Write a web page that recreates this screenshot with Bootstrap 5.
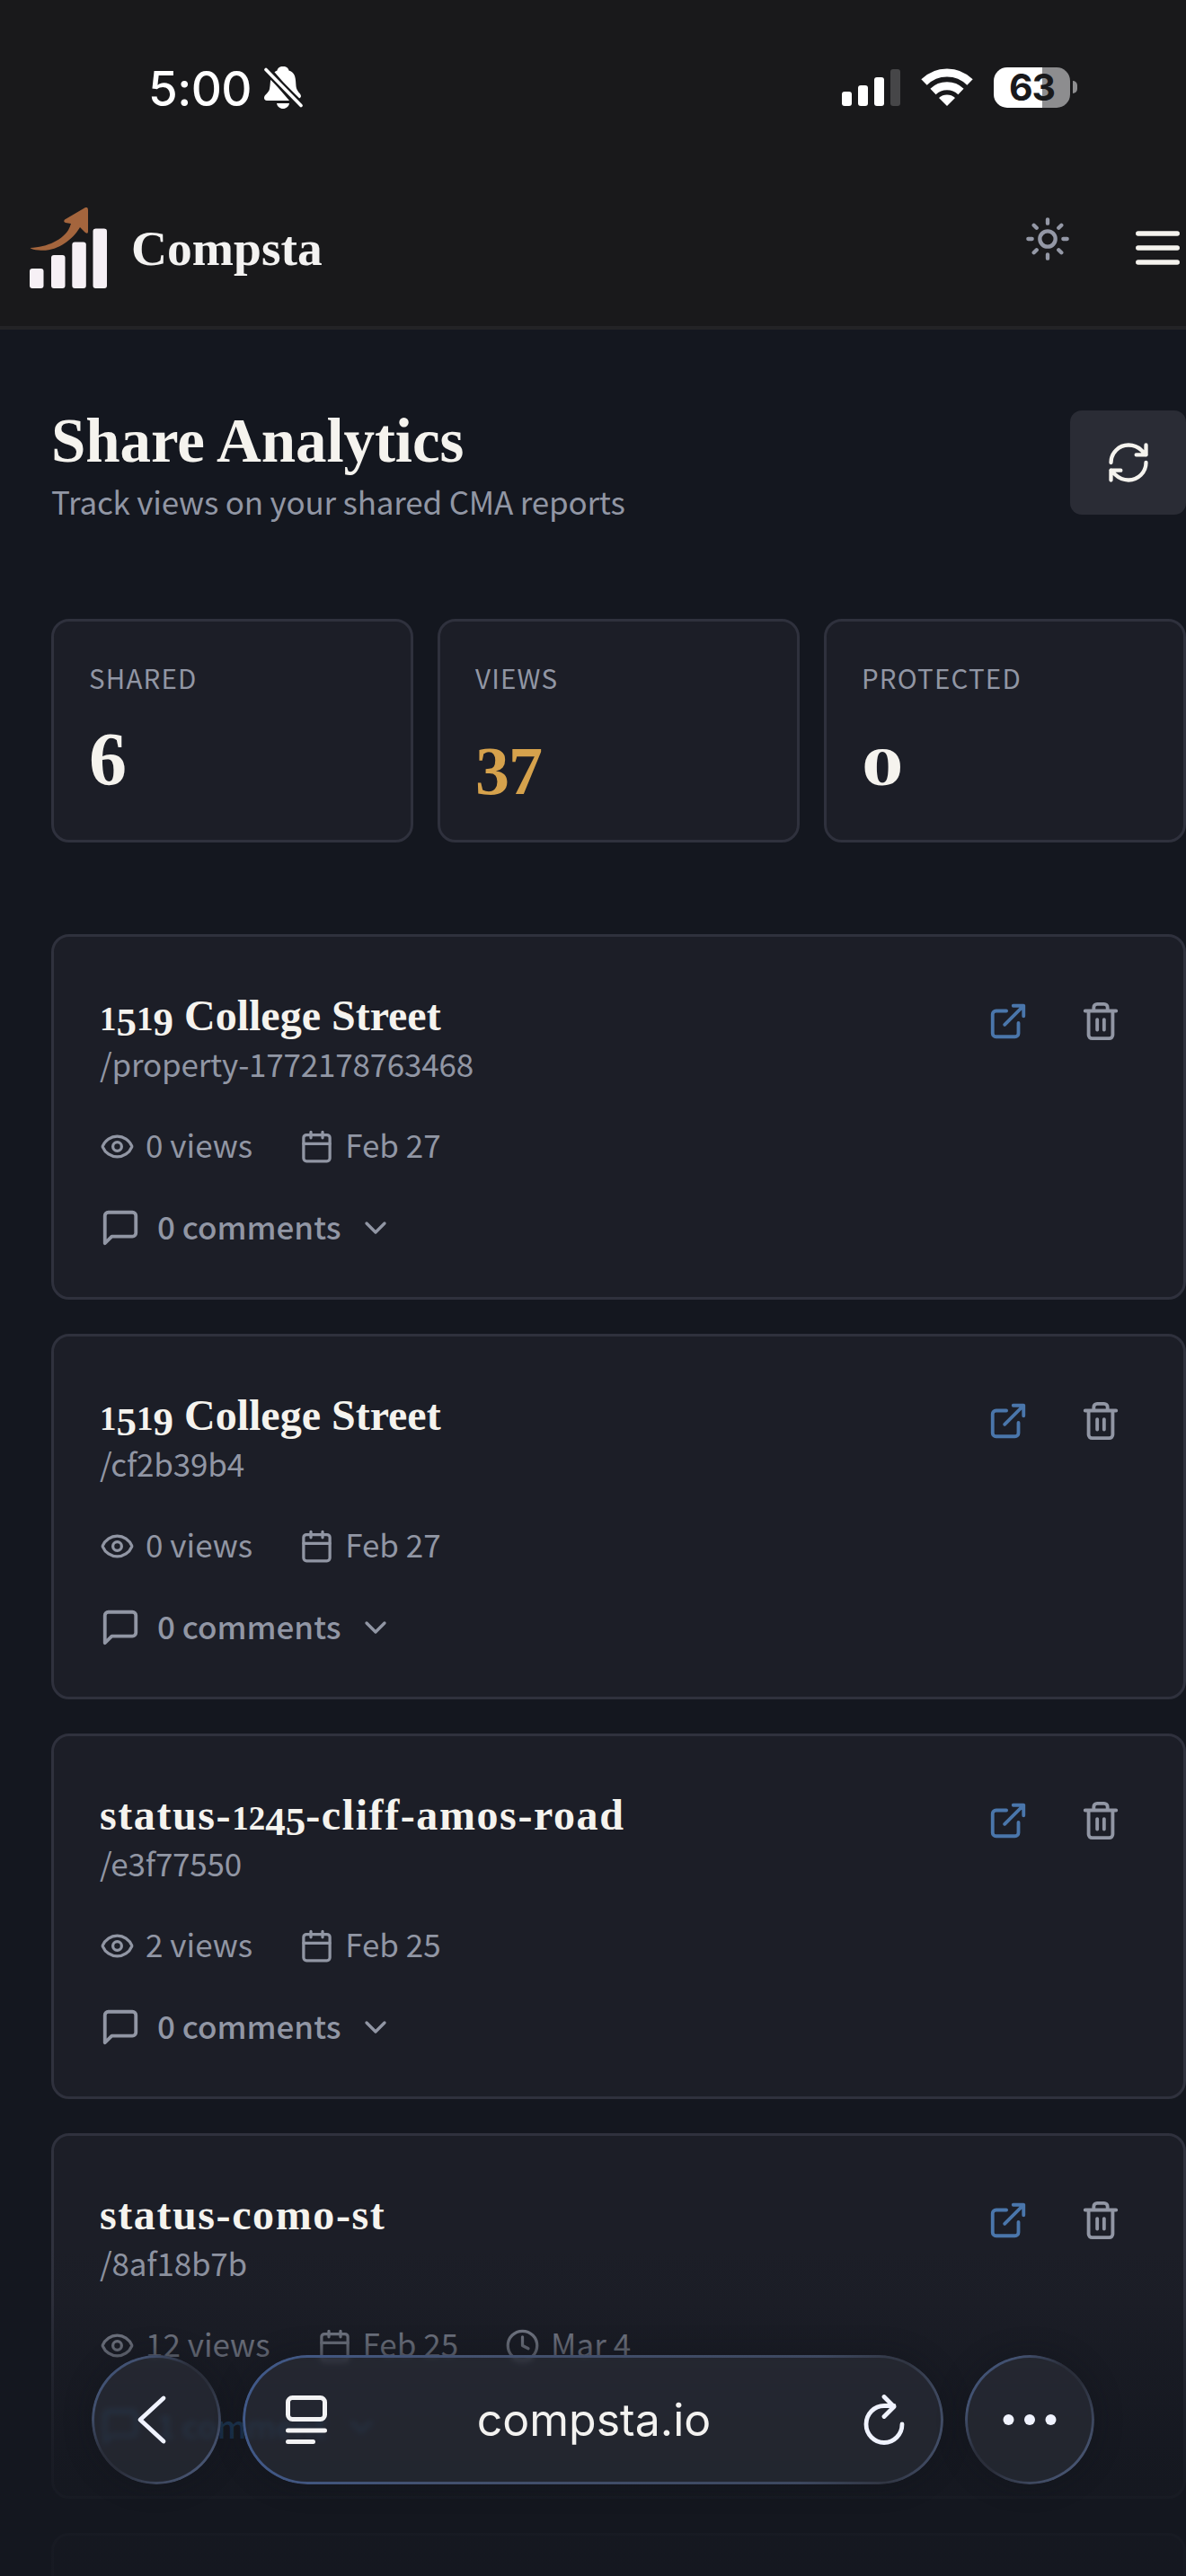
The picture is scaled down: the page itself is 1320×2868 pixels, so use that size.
<!DOCTYPE html>
<html lang="en" data-bs-theme="dark">
<head>
<meta charset="utf-8">
<title>Compsta - Share Analytics</title>
<link href="https://cdn.jsdelivr.net/npm/bootstrap@5.3.0/dist/css/bootstrap.min.css" rel="stylesheet">
<style>
  body { background: #14171f; color: #9196a4; font-family: "Noto Sans CJK SC", "Open Sans", sans-serif; }
  .phone { width: 1320px; height: 2868px; }
  svg { display: block; flex: none; }
  .ico { fill: none; stroke: currentColor; stroke-width: 2; stroke-linecap: round; stroke-linejoin: round; }
  .display-face { font-family: "Liberation Serif", serif; font-weight: 700; color: #f5f3ee; margin: 0; }
  .ui-face { font-family: Inter, "Liberation Sans", sans-serif; }

  .app-top { height: 367px; background: #19191b; border-bottom: 4px solid #232326; }
  .status-bar { height: 194px; padding: 0 121px 0 165px; color: #fff; }
  .clock-text { font-size: 53px; line-height: 60px; font-weight: 500; letter-spacing: -.6px; margin: 3px 13px 0 0; }
  .battery { width: 85px; height: 45px; border-radius: 15px; background: linear-gradient(90deg, #fff 63.5%, #8d8d8f 63.5%);
             color: #19191b; font-size: 41px; line-height: 45px; font-weight: 700; letter-spacing: -1px; }
  .battery-cap { width: 5px; height: 14px; border-radius: 0 5px 5px 0; background: #8d8d8f; margin-left: 3px; }
  .wifi { margin: 0 23px; }
  .top-nav { height: 162px; padding: 2px 7px 0 33px; }
  .brand-text { font-size: 55.5px; line-height: 60px; margin: 2px 0 0 27px; color: #f3f2f1; }
  .theme-btn { color: #9498a6; margin: 0 72px 20px 0; }

  .page-main { padding: 84px 0 0 57px; }
  .page-title { font-size: 69px; line-height: 80px; letter-spacing: -.1px; }
  .page-sub { font-size: 35px; line-height: 50px; letter-spacing: -.2px; margin-top: 2px; }
  .refresh-btn { width: 129px; height: 116px; margin-top: 6px; border-radius: 13px; background: #2a2c35; color: #f5f3ee; }

  .panel { background: #1c1e27; border: 3px solid #2f313d; border-radius: 20px; }
  .stats { gap: 27px; margin-top: 106px; }
  .stat { height: 249px; padding: 40px 39px 0; }
  .stat-label { font-size: 29.5px; line-height: 44px; letter-spacing: 1.2px; }
  .stat-num { font-size: 84px; line-height: 84px; margin-top: 28px; }
  .stat-num span { display: inline-block; line-height: 0; }
  .gold { color: #d6a24c; }
  .n-low { font-size: 76px; vertical-align: -10px; letter-spacing: -1px; }
  .n-round { font-size: 62px; transform: scaleX(1.5); transform-origin: 0 50%; }

  .shares { margin-top: 102px; gap: 38px; }
  .share { height: 407px; flex: none; padding: 58px 69px 0 51px; }
  .share-title { font-size: 48px; line-height: 60px; }
  .share-title.slugged { letter-spacing: 1.6px; }
  .share-title i { font-style: normal; line-height: 0; letter-spacing: 0; }
  .dx { font-size: 37px; }
  .dd { font-size: 45px; vertical-align: -6px; }
  .share-path { font-size: 35px; line-height: 46px; letter-spacing: -.2px; }
  .meta { margin-top: 42px; font-size: 35px; line-height: 50px; gap: 52px; }
  .meta > span { gap: 12px; }
  .meta svg { margin-top: 5px; }
  .comments { margin-top: 41px; font-size: 35px; line-height: 50px; font-weight: 500; }
  .comments svg { margin-top: 3px; }
  .comments .lbl { margin: 0 19px 0 18px; }
  .comments.linked { color: #3079c0; }
  .actions { gap: 57px; margin-top: 13px; height: 46px; }
  .blue { color: #4a76ab; }

  .fade-layer { position: absolute; left: 0; right: 0; top: 2500px; height: 368px;
    background: linear-gradient(180deg, rgba(20,23,31,0) 0, rgba(20,23,31,.1) 60px, rgba(20,23,31,.42) 120px, rgba(20,23,31,.7) 200px, rgba(20,23,31,.85) 265px, rgba(20,23,31,.88) 100%); }
  .browser-bar { position: absolute; left: 102px; top: 2622px; width: 1116px; height: 144px; gap: 24px; color: #f0f3ff; }
  .glass { position: relative; height: 144px; border-radius: 72px; background: rgba(45,48,58,.58);
    backdrop-filter: blur(3px); box-shadow: 0 0 30px rgba(15,18,24,.35); }
  .glass::before { content: ""; position: absolute; inset: 0; padding: 3px; border-radius: inherit;
    background: linear-gradient(135deg, #405680 0, #42506e 22%, #2a2e3a 42%, #2a2e3a 55%, #46536f 85%, #3e4a64 100%);
    -webkit-mask: linear-gradient(#000 0 0) content-box, linear-gradient(#000 0 0); -webkit-mask-composite: xor; mask-composite: exclude; }
  .glass.rnd { width: 144px; }
  .glass.addr { padding: 0 42px 0 47px; }
  .glass.addr::before { background: linear-gradient(100deg, #40598a 0, #43516f 30%, #3d4860 80%, #303542 92%, #46536f 100%); }
  .back-ico { stroke-width: 4.8; }
  .addr-text { font-size: 50px; line-height: 60px; color: #f3f2f0; margin-left: -3px; }
</style>
<script src="https://cdn.jsdelivr.net/npm/bootstrap@5.3.0/dist/js/bootstrap.bundle.min.js"></script>
</head>
<body>
<div class="phone position-relative overflow-hidden">
<svg width="0" height="0" class="position-absolute">
  <symbol id="i-open" viewBox="0 0 24 24"><path d="M15 3h6v6M10 14 21 3M18 13v6a2 2 0 0 1-2 2H5a2 2 0 0 1-2-2V8a2 2 0 0 1 2-2h6"/></symbol>
  <symbol id="i-trash" viewBox="0 0 24 24"><path d="M3 6h18M19 6v14a2 2 0 0 1-2 2H7a2 2 0 0 1-2-2V6M8 6V4a2 2 0 0 1 2-2h4a2 2 0 0 1 2 2v2M10 11v6M14 11v6"/></symbol>
  <symbol id="i-eye" viewBox="0 0 24 24"><path d="M2.062 12.348a1 1 0 0 1 0-.696 10.75 10.75 0 0 1 19.876 0 1 1 0 0 1 0 .696 10.75 10.75 0 0 1-19.876 0"/><circle cx="12" cy="12" r="3"/></symbol>
  <symbol id="i-cal" viewBox="0 0 24 24"><path d="M8 2v4M16 2v4M3 10h18"/><rect x="3" y="4" width="18" height="18" rx="2"/></symbol>
  <symbol id="i-clock" viewBox="0 0 24 24"><circle cx="12" cy="12" r="10"/><path d="M12 6v6l4 2"/></symbol>
  <symbol id="i-msg" viewBox="0 0 24 24"><path d="M21 15a2 2 0 0 1-2 2H7l-4 4V5a2 2 0 0 1 2-2h14a2 2 0 0 1 2 2z"/></symbol>
  <symbol id="i-down" viewBox="0 0 24 24"><path d="m6 9 6 6 6-6"/></symbol>
</svg>

<header class="app-top">
  <div class="status-bar ui-face d-flex align-items-center justify-content-between">
    <div class="d-flex align-items-center">
      <span class="clock-text">5:00</span>
      <svg width="44" height="48" viewBox="0 0 44 48">
        <path fill="#fff" d="M22 1c-4 0-6 2-6.500 4.500-1 .3-2 1-3 1.800L38 37c2.500 0 4-1.500 4-3 0-3-5-5-5.500-11C36 14 36 8 28.500 5.500 28 3 26 1 22 1zM8.500 15C7.500 18 8 21 7 26c-1 5-6 6-6 10 0 1.600 1 3 3 3h25zM15 42h14c-.5 3.500-3.500 6-7 6s-6.500-2.500-7-6z"/>
        <path stroke="#19191b" stroke-width="8" d="M2 4 43 45"/>
        <path stroke="#fff" stroke-width="3.600" stroke-linecap="round" d="M3 4.500 42 44.500"/>
      </svg>
    </div>
    <div class="d-flex align-items-center">
      <svg width="65" height="41" viewBox="0 0 65 41" fill="#fff"><rect y="25" width="11" height="16" rx="3"/><rect x="18" y="18" width="11" height="23" rx="3"/><rect x="36" y="9" width="11" height="32" rx="3"/><rect x="54" width="11" height="41" rx="3" fill="#464648"/></svg>
      <svg class="wifi" width="58" height="42" viewBox="0 0 58 42" fill="none" stroke="#fff" stroke-width="9"><path d="M3.500 15.500a36 36 0 0 1 51 0"/><path d="M13.500 26a22.500 22.500 0 0 1 31 0"/><path d="M29 42 20 33a13.500 13.500 0 0 1 18 0z" fill="#fff" stroke="none"/></svg>
      <div class="battery text-center">63</div><div class="battery-cap"></div>
    </div>
  </div>
  <nav class="top-nav d-flex align-items-center">
    <svg width="86" height="90" viewBox="0 0 86 90">
      <g fill="#f6f0f5"><rect y="68" width="15.500" height="22" rx="3"/><rect x="24" y="53" width="15.500" height="37" rx="3"/><rect x="47.300" y="38.500" width="15.500" height="51.500" rx="3"/><rect x="70.500" y="23.500" width="15.500" height="66.500" rx="3"/></g>
      <path fill="#a4653d" d="M62 0q3-1 3 3v24q0 3-3 1l-6-6C48 36 30 50 10 47.500Q3 47 .5 45C22 44 42 34 46 18l-6-1q-3-1-1-3.500z"/>
    </svg>
    <span class="display-face brand-text">Compsta</span>
    <a class="theme-btn ms-auto"><svg class="ico" width="52" height="52" viewBox="0 0 24 24"><circle cx="12" cy="12" r="4"/><path d="M12 2v2M12 20v2M4.930 4.930l1.410 1.410M17.660 17.660l1.410 1.410M2 12h2M20 12h2M6.340 17.660l-1.410 1.410M19.070 4.930l-1.410 1.410"/></svg></a>
    <svg width="49" height="38" viewBox="0 0 49 38" stroke="#f5f3ee" stroke-width="5.500" stroke-linecap="round"><path d="M2.800 3h43.400M2.800 19h43.400M2.800 35h43.400"/></svg>
  </nav>
</header>

<main class="page-main">
  <div class="d-flex justify-content-between align-items-start">
    <div>
      <h1 class="display-face page-title">Share Analytics</h1>
      <div class="page-sub">Track views on your shared CMA reports</div>
    </div>
    <a class="refresh-btn d-flex align-items-center justify-content-center"><svg class="ico" width="52" height="52" viewBox="0 0 24 24"><path d="M3 12a9 9 0 0 1 9-9 9.750 9.750 0 0 1 6.740 2.740L21 8M21 3v5h-5M21 12a9 9 0 0 1-9 9 9.750 9.750 0 0 1-6.740-2.740L3 16M8 16H3v5"/></svg></a>
  </div>

  <section class="stats d-flex">
    <div class="panel stat flex-fill w-100"><div class="stat-label">SHARED</div><div class="display-face stat-num">6</div></div>
    <div class="panel stat flex-fill w-100"><div class="stat-label">VIEWS</div><div class="display-face stat-num gold"><span class="n-low">37</span></div></div>
    <div class="panel stat flex-fill w-100"><div class="stat-label">PROTECTED</div><div class="display-face stat-num"><span class="n-round">0</span></div></div>
  </section>

  <section class="shares d-flex flex-column">
    <article class="panel share d-flex justify-content-between">
      <div>
        <h2 class="display-face share-title"><i class="dx">1</i><i class="dd">5</i><i class="dx">1</i><i class="dd">9</i> College Street</h2>
        <div class="share-path">/property-1772178763468</div>
        <div class="meta d-flex">
          <span class="d-flex align-items-center"><svg class="ico" width="39" height="39"><use href="#i-eye"/></svg>0 views</span>
          <span class="d-flex align-items-center"><svg class="ico" width="39" height="39"><use href="#i-cal"/></svg>Feb 27</span>
        </div>
        <div class="comments d-flex align-items-center"><svg class="ico" width="46" height="46"><use href="#i-msg"/></svg><span class="lbl">0 comments</span><svg class="ico" width="40" height="40"><use href="#i-down"/></svg></div>
      </div>
      <div class="actions d-flex"><svg class="ico blue" width="46" height="46"><use href="#i-open"/></svg><svg class="ico" width="46" height="46"><use href="#i-trash"/></svg></div>
    </article>

    <article class="panel share d-flex justify-content-between">
      <div>
        <h2 class="display-face share-title"><i class="dx">1</i><i class="dd">5</i><i class="dx">1</i><i class="dd">9</i> College Street</h2>
        <div class="share-path">/cf2b39b4</div>
        <div class="meta d-flex">
          <span class="d-flex align-items-center"><svg class="ico" width="39" height="39"><use href="#i-eye"/></svg>0 views</span>
          <span class="d-flex align-items-center"><svg class="ico" width="39" height="39"><use href="#i-cal"/></svg>Feb 27</span>
        </div>
        <div class="comments d-flex align-items-center"><svg class="ico" width="46" height="46"><use href="#i-msg"/></svg><span class="lbl">0 comments</span><svg class="ico" width="40" height="40"><use href="#i-down"/></svg></div>
      </div>
      <div class="actions d-flex"><svg class="ico blue" width="46" height="46"><use href="#i-open"/></svg><svg class="ico" width="46" height="46"><use href="#i-trash"/></svg></div>
    </article>

    <article class="panel share d-flex justify-content-between">
      <div>
        <h2 class="display-face share-title slugged">status-<i class="dx">12</i><i class="dd">45</i>-cliff-amos-road</h2>
        <div class="share-path">/e3f77550</div>
        <div class="meta d-flex">
          <span class="d-flex align-items-center"><svg class="ico" width="39" height="39"><use href="#i-eye"/></svg>2 views</span>
          <span class="d-flex align-items-center"><svg class="ico" width="39" height="39"><use href="#i-cal"/></svg>Feb 25</span>
        </div>
        <div class="comments d-flex align-items-center"><svg class="ico" width="46" height="46"><use href="#i-msg"/></svg><span class="lbl">0 comments</span><svg class="ico" width="40" height="40"><use href="#i-down"/></svg></div>
      </div>
      <div class="actions d-flex"><svg class="ico blue" width="46" height="46"><use href="#i-open"/></svg><svg class="ico" width="46" height="46"><use href="#i-trash"/></svg></div>
    </article>

    <article class="panel share d-flex justify-content-between">
      <div>
        <h2 class="display-face share-title slugged">status-como-st</h2>
        <div class="share-path">/8af18b7b</div>
        <div class="meta d-flex">
          <span class="d-flex align-items-center"><svg class="ico" width="39" height="39"><use href="#i-eye"/></svg>12 views</span>
          <span class="d-flex align-items-center"><svg class="ico" width="39" height="39"><use href="#i-cal"/></svg>Feb 25</span>
          <span class="d-flex align-items-center"><svg class="ico" width="39" height="39"><use href="#i-clock"/></svg>Mar 4</span>
        </div>
        <div class="comments linked d-flex align-items-center"><svg class="ico" width="46" height="46"><use href="#i-msg"/></svg><span class="lbl">1 comment</span><svg class="ico" width="40" height="40"><use href="#i-down"/></svg></div>
      </div>
      <div class="actions d-flex"><svg class="ico blue" width="46" height="46"><use href="#i-open"/></svg><svg class="ico" width="46" height="46"><use href="#i-trash"/></svg></div>
    </article>

    <article class="panel share"></article>
  </section>
</main>

<div class="fade-layer"></div>
<div class="browser-bar d-flex">
  <div class="glass rnd d-flex align-items-center justify-content-center"><svg class="ico back-ico" width="144" height="138" viewBox="0 0 144 138"><path d="M80 45 54 69l26 24"/></svg></div>
  <div class="glass addr flex-fill d-flex align-items-center justify-content-between">
    <svg width="48" height="56" viewBox="0 0 48 56" fill="none" stroke="#f3f3f4" stroke-width="5" stroke-linecap="round"><rect x="3.500" y="3.500" width="41" height="24" rx="5"/><path d="M3.500 40h41M3.500 52.500h28"/></svg>
    <span class="ui-face addr-text">compsta.io</span>
    <svg width="48" height="56" viewBox="0 0 48 56" fill="none" stroke="#f0f3ff" stroke-width="4.800" stroke-linecap="round" stroke-linejoin="round"><path d="M44 33A20 20.500 0 1 1 24 12.500h11M24 2.500 35 13.500 24 24.500"/></svg>
  </div>
  <div class="glass rnd d-flex align-items-center justify-content-center"><svg width="60" height="12" viewBox="0 0 60 12" fill="#f0f3ff"><circle cx="6.500" cy="6" r="6"/><circle cx="30" cy="6" r="6"/><circle cx="53.500" cy="6" r="6"/></svg></div>
</div>
</div>
</body>
</html>
